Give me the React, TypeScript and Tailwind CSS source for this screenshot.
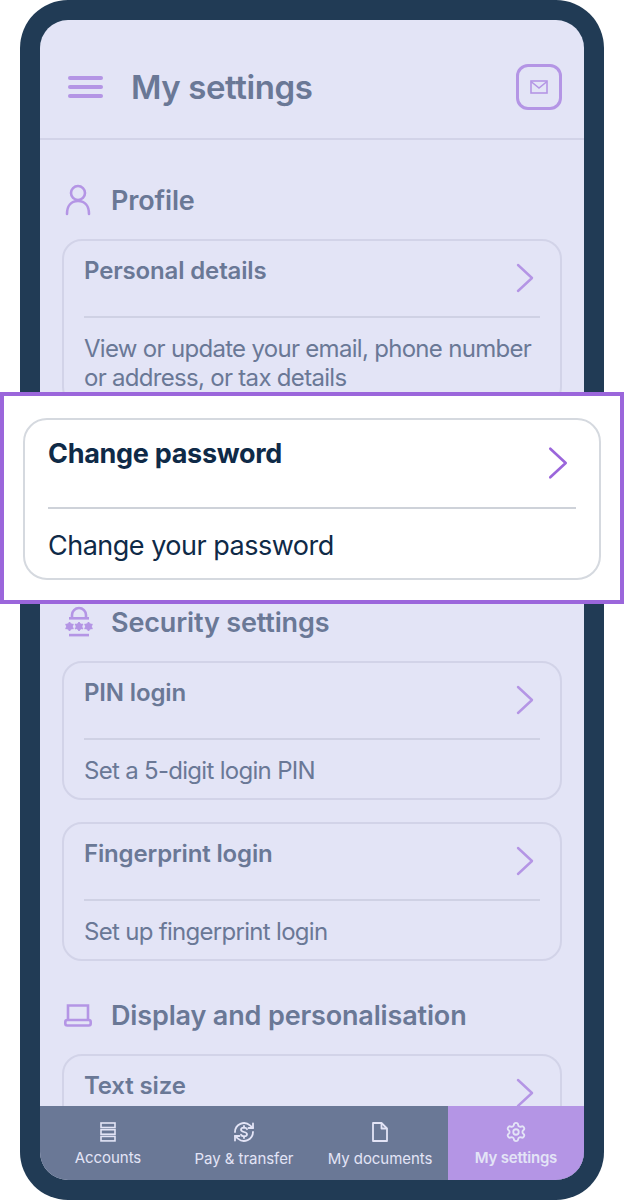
import { Settings } from 'lucide-react';

const fontStack = "font-['Inter',sans-serif]";

function Chevron({ className }: { className: string }) {
  return (
    <svg viewBox="0 0 20 30" fill="none" className={className}>
      <path d="M3 2l14 13L3 28" stroke="currentColor" strokeWidth="2.4" strokeLinecap="round" strokeLinejoin="round" />
    </svg>
  );
}

function Card({ title, desc }: { title: string; desc: string[] }) {
  return (
    <div className="rounded-[20px] border-2 border-[#d2d3e8] px-5 pb-[13px]">
      <div className="flex h-[77px] justify-between border-b-2 border-[#cfd1e4]">
        <div className="mt-[14px] text-[24px] leading-[32px] font-semibold tracking-[-0.15px] text-[#6a7896]">{title}</div>
        <Chevron className="mr-[5px] mt-[22px] h-[30px] w-[20px] text-[#b495e5]" />
      </div>
      <div className="mt-[16px] text-[24px] leading-[29px] tracking-[-0.7px] whitespace-nowrap text-[#6a7896]">
        {desc.map((line) => (
          <div key={line}>{line}</div>
        ))}
      </div>
    </div>
  );
}

function Section({ icon, title, cards }: { icon: React.ReactNode; title: string; cards: React.ReactNode }) {
  return (
    <section className="mb-[36px]">
      <div className="mb-[21px] flex h-[36px] items-center">
        <div className="flex w-[49px] justify-start">{icon}</div>
        <h2 className="pt-[2px] text-[27px] leading-[36px] font-semibold tracking-[-0.15px] text-[#6a7896]">{title}</h2>
      </div>
      <div className="flex flex-col gap-[22px]">{cards}</div>
    </section>
  );
}

function UserIcon() {
  return (
    <svg viewBox="0 0 26 32" fill="none" className="h-[32px] w-[26px] text-[#b495e5]">
      <circle cx="13" cy="9" r="7" stroke="currentColor" strokeWidth="2.6" />
      <path d="M2 30c0-8 4-13 11-13s11 5 11 13" stroke="currentColor" strokeWidth="2.6" strokeLinecap="round" />
    </svg>
  );
}

function LockIcon() {
  return (
    <svg viewBox="0 0 28 32" fill="currentColor" className="h-[32px] w-[28px] text-[#b495e5]">
      <path d="M7 12V9a7 7 0 0 1 14 0v3" fill="none" stroke="currentColor" strokeWidth="2.6" />
      <rect x="4" y="11" width="20" height="2.6" />
      {[4.500, 14, 23.500].map((cx) => (
        <g key={cx}>
          <circle cx={cx} cy="20.500" r="3.400" />
          <path d={`M${cx} 16v9M${cx - 4} 18.300l8 4.400M${cx - 4} 22.700l8-4.400`} stroke="currentColor" strokeWidth="1.800" />
        </g>
      ))}
      <rect x="4" y="27.800" width="20" height="2.600" />
    </svg>
  );
}

function LaptopIcon() {
  return (
    <svg viewBox="0 0 28 24" fill="none" className="h-[24px] w-[28px] -translate-x-[1px] text-[#b495e5]">
      <path d="M4 17V2.500h20V17" stroke="currentColor" strokeWidth="2.6" />
      <rect x="1.300" y="17" width="25.400" height="5.500" rx="2" stroke="currentColor" strokeWidth="2.6" />
    </svg>
  );
}

function StackIcon() {
  return (
    <svg viewBox="0 0 16 20" fill="none" className="h-[20px] w-[16px]">
      <rect x="1" y="1" width="14" height="4.500" stroke="currentColor" strokeWidth="1.600" />
      <rect x="1" y="7.700" width="14" height="4.500" stroke="currentColor" strokeWidth="1.600" />
      <rect x="1" y="14.400" width="14" height="4.500" stroke="currentColor" strokeWidth="1.600" />
    </svg>
  );
}

function PayIcon() {
  return (
    <svg viewBox="0 0 22 22" fill="none" className="h-[22px] w-[22px]" stroke="currentColor" strokeWidth="1.800" strokeLinecap="round" strokeLinejoin="round">
      <path d="M2 11a9 9 0 0 1 15-6.600L20 7" />
      <path d="M20 2.500V7h-4.500" />
      <path d="M20 11a9 9 0 0 1-15 6.600L2 15" />
      <path d="M2 19.500V15h4.500" />
      <path d="M14 8.200c-.5-1-1.600-1.500-3-1.500-1.800 0-3 .9-3 2.100 0 2.900 6 1.500 6 4.400 0 1.200-1.300 2.100-3 2.100-1.500 0-2.600-.6-3-1.600" />
      <path d="M11 5v1.700M11 15.300V17" />
    </svg>
  );
}

function DocIcon() {
  return (
    <svg viewBox="0 0 16 20" fill="none" className="h-[20px] w-[16px]" stroke="currentColor" strokeWidth="1.800" strokeLinejoin="round">
      <path d="M1 1h8.500L15 6.500V19H1z" />
      <path d="M9.500 1v5.500H15" />
    </svg>
  );
}

const navItems = [
  { label: 'Accounts', icon: <StackIcon />, labelClass: 'mt-[5px]' },
  { label: 'Pay & transfer', icon: <PayIcon />, labelClass: 'mt-[6px]' },
  { label: 'My documents', icon: <DocIcon />, labelClass: 'mt-[6px]' },
];

export default function App() {
  return (
    <div className={`relative h-[1200px] w-[624px] overflow-hidden bg-white ${fontStack}`}>
      <div className="mx-[20px] h-[1200px] rounded-[48px] bg-[#213b55] p-[20px]">
        <div className="flex h-[1160px] flex-col overflow-hidden rounded-[28px] bg-[#e3e4f6]">
          <header className="flex h-[120px] shrink-0 items-center justify-between border-b-2 border-[#d2d3e8] pl-[28px] pr-[22px] pt-[16px]">
            <div className="flex items-center">
              <div className="flex w-[63px] flex-col gap-[5px]">
                <span className="h-[4px] w-[35px] rounded-full bg-[#b495e5]" />
                <span className="h-[4px] w-[35px] rounded-full bg-[#b495e5]" />
                <span className="h-[4px] w-[35px] rounded-full bg-[#b495e5]" />
              </div>
              <h1 className="text-[33px] leading-[40px] font-semibold tracking-[-0.4px] text-[#6a7896]">My settings</h1>
            </div>
            <div className="flex h-[46px] w-[46px] items-center justify-center rounded-[12px] border-[3px] border-[#b495e5]">
              <svg viewBox="0 0 18 14" fill="none" className="h-[14px] w-[18px] text-[#b495e5]" stroke="currentColor" strokeWidth="1.600">
                <rect x="1" y="1" width="16" height="12" />
                <path d="M1 1.500l8 6.500 8-6.500" />
              </svg>
            </div>
          </header>

          <main className="min-h-0 flex-1 overflow-hidden px-[22px] pt-[42px]">
            <Section
              icon={<div className="pl-[3px]"><UserIcon /></div>}
              title="Profile"
              cards={
                <>
                  <Card title="Personal details" desc={['View or update your email, phone number', 'or address, or tax details']} />
                  {/* slot covered by the callout below */}
                  <div className="h-[139px]" />
                </>
              }
            />
            <Section
              icon={<div className="pl-[3px]"><LockIcon /></div>}
              title="Security settings"
              cards={
                <>
                  <Card title="PIN login" desc={['Set a 5-digit login PIN']} />
                  <Card title="Fingerprint login" desc={['Set up fingerprint login']} />
                </>
              }
            />
            <Section
              icon={<div className="pl-[3px]"><LaptopIcon /></div>}
              title="Display and personalisation"
              cards={<Card title="Text size" desc={[]} />}
            />
          </main>

          <nav className="grid h-[74px] shrink-0 grid-cols-4 bg-[#6a7896] text-[#e3e4f6]">
            {navItems.map((item) => (
              <div key={item.label} className="flex flex-col items-center pt-[15px]">
                <div className="flex h-[22px] items-center">{item.icon}</div>
                <span className={`${item.labelClass} text-[15px] leading-[20px] tracking-[-0.05px] whitespace-nowrap`}>{item.label}</span>
              </div>
            ))}
            <div className="flex flex-col items-center bg-[#b495e5] pt-[15px]">
              <div className="flex h-[22px] items-center"><Settings size={22} strokeWidth={2} /></div>
              <span className="mt-[5px] text-[15px] leading-[20px] font-semibold tracking-[-0.2px] whitespace-nowrap">My settings</span>
            </div>
          </nav>
        </div>
      </div>

      {/* highlight callout over the page */}
      <div className="absolute top-[392px] left-0 h-[212px] w-[624px] border-[4px] border-[#9b66db] bg-white pt-[22px] pl-[19px]">
        <div className="h-[162px] w-[578px] rounded-[24px] border-2 border-[#d5d9df] px-[23px]">
          <div className="flex h-[89px] justify-between border-b-2 border-[#ced2d9]">
            <div className="mt-[16px] text-[27px] leading-[36px] font-bold tracking-[-0.3px] text-[#0f2a47]">Change password</div>
            <Chevron className="mr-[7px] mt-[25px] h-[36px] w-[22px] text-[#9b66db]" />
          </div>
          <div className="mt-[19px] text-[27px] leading-[36px] tracking-[-0.5px] text-[#0f2a47]">Change your password</div>
        </div>
      </div>
    </div>
  );
}
